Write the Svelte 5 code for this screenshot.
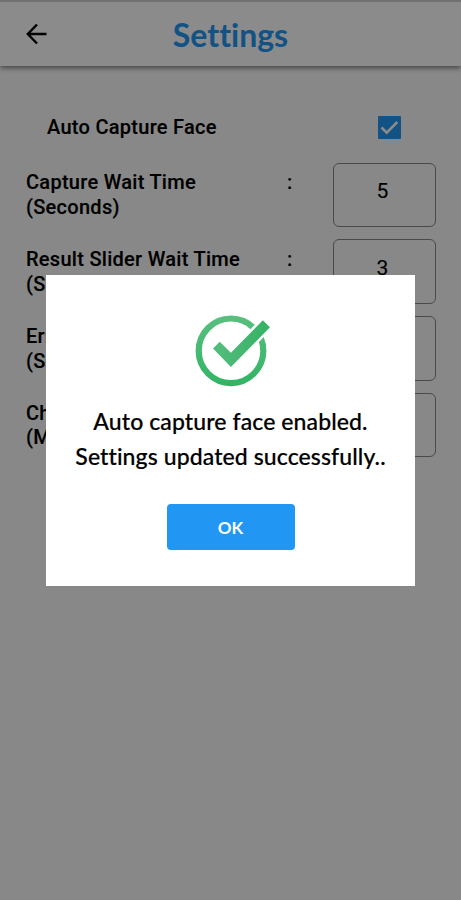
<script lang="ts">
	let autoCapture = $state(true);
	let dialogOpen = $state(true);

	let fields = $state([
		{ label: 'Capture Wait Time', unit: '(Seconds)', value: '5' },
		{ label: 'Result Slider Wait Time', unit: '(Seconds)', value: '3' },
		{ label: 'Error Wait Time', unit: '(Seconds)', value: '' },
		{ label: 'Check In Wait Time', unit: '(Minutes)', value: '' }
	]);
</script>

<div class="screen">
	<header class="app-bar">
		<button class="back" aria-label="Back">
			<svg viewBox="0 0 22 22" width="22" height="22">
				<path d="M20.5 11H2.5M11 1.5L1.8 11L11 20.5" />
			</svg>
		</button>
		<h1>Settings</h1>
	</header>

	<main>
		<div class="toggle-row">
			<span>Auto Capture Face</span>
			<button
				class="checkbox"
				class:checked={autoCapture}
				role="checkbox"
				aria-checked={autoCapture}
				aria-label="Auto Capture Face"
				onclick={() => (autoCapture = !autoCapture)}
			>
				{#if autoCapture}
					<svg viewBox="0 0 23 23" width="23" height="23">
						<path d="M3.5 11.5L8.7 16.7L19.3 6" />
					</svg>
				{/if}
			</button>
		</div>

		{#each fields as field}
			<div class="field">
				<div class="label">
					<span>{field.label}</span>
					<span>{field.unit}</span>
				</div>
				<span class="colon">:</span>
				<input bind:value={field.value} aria-label={field.label} />
			</div>
		{/each}
	</main>

	{#if dialogOpen}
		<div class="overlay">
			<div class="dialog" role="alertdialog" aria-label="Settings updated">
				<svg class="success" viewBox="0 0 76 74" width="76" height="74">
					<defs>
						<linearGradient id="green" x1="0" y1="0" x2="0" y2="74" gradientUnits="userSpaceOnUse">
							<stop offset="0" stop-color="#5abf80" />
							<stop offset="1" stop-color="#30b463" />
						</linearGradient>
						<linearGradient id="tick-green" x1="25" y1="0" x2="70" y2="0" gradientUnits="userSpaceOnUse">
							<stop offset="0" stop-color="#52bb7b" />
							<stop offset="1" stop-color="#36b366" />
						</linearGradient>
					</defs>
					<circle class="ring" cx="36" cy="36.8" r="32.3" />
					<!-- white outline cuts the ring where the tick crosses it -->
					<path class="gap" d="M18 34.5L24.7 27.8L35.9 38.7L67.8 6.2L75 13.2L35.9 53Z" />
					<path class="tick" d="M18 34.5L24.7 27.8L35.9 38.7L67.8 6.2L75 13.2L35.9 53Z" />
				</svg>
				<p>Auto capture face enabled.<br />Settings updated successfully..</p>
				<button class="ok" onclick={() => (dialogOpen = false)}>OK</button>
			</div>
		</div>
	{/if}
</div>

<style>
	:global(body) {
		margin: 0;
	}

	.screen {
		position: relative;
		height: 100vh;
		overflow: hidden;
		background: #fafafa;
		color: #000;
		font-family: Roboto, sans-serif;
		font-variant-ligatures: none;
	}

	button {
		padding: 0;
		border: 0;
		background: none;
	}

	svg {
		display: block;
	}

	.app-bar {
		display: grid;
		grid-template-columns: 72px 1fr 72px;
		align-items: center;
		box-sizing: border-box;
		height: 66px;
		border-top: 2px solid #d0d0d0;
		background: #fff;
		box-shadow: 0 2px 5px rgba(0, 0, 0, 0.5);
	}

	.back {
		margin-left: 26px;
		width: 22px;
	}

	.back path {
		fill: none;
		stroke: #000;
		stroke-width: 2.4;
	}

	h1 {
		margin: 2px 0 0;
		color: #2196f3;
		font-family: Lato, sans-serif;
		font-size: 32px;
		font-weight: 700;
		line-height: 40px;
		text-align: center;
	}

	main {
		padding: 49px 25px 0 26px;
		font-size: 20px;
		font-weight: 500;
		line-height: 24.6px;
		letter-spacing: 0.28px;
		-webkit-text-stroke: 0.15px #000;
	}

	.toggle-row {
		display: flex;
		justify-content: space-between;
		align-items: center;
		height: 24px;
		margin-bottom: 23.6px;
		padding: 0 35px 0 21px;
	}

	.checkbox {
		box-sizing: border-box;
		width: 23px;
		height: 23px;
		border: 2px solid #757575;
		border-radius: 1px;
	}

	.checkbox.checked {
		border: 0;
		background: #2196f3;
	}

	.checkbox path {
		fill: none;
		stroke: #fff;
		stroke-width: 2.5;
	}

	.field {
		display: grid;
		grid-template-columns: 261px 1fr 103px;
		height: 64.5px;
		margin-bottom: 12.3px;
	}

	.label {
		display: flex;
		flex-direction: column;
		padding-top: 7.8px;
		white-space: nowrap;
	}

	.colon {
		padding-top: 7.8px;
	}

	input {
		box-sizing: border-box;
		width: 103px;
		height: 64.5px;
		padding: 0 8px 8px 4px;
		border: 1px solid #888;
		border-radius: 6px;
		background: transparent;
		color: #000;
		font-family: Roboto, sans-serif;
		font-size: 21px;
		text-align: center;
		-webkit-text-stroke: 0.15px #000;
	}

	.overlay {
		position: absolute;
		inset: 0;
		display: flex;
		justify-content: center;
		align-items: flex-start;
		padding-top: 275px;
		background: rgba(0, 0, 0, 0.455);
	}

	.dialog {
		display: flex;
		flex-direction: column;
		align-items: center;
		box-sizing: border-box;
		width: 369px;
		height: 311px;
		padding-top: 39px;
		background: #fff;
	}

	.success {
		margin-left: 4px;
	}

	.ring {
		fill: none;
		stroke: url(#green);
		stroke-width: 6.2;
	}

	.gap {
		fill: #fff;
		stroke: #fff;
		stroke-width: 5;
	}

	.tick {
		fill: url(#tick-green);
	}

	p {
		margin: 16px 0 0;
		font-family: Lato, sans-serif;
		font-size: 23px;
		font-weight: 500;
		line-height: 34.5px;
		letter-spacing: 0.1px;
		text-align: center;
		white-space: nowrap;
		-webkit-text-stroke: 0.2px #000;
	}

	.ok {
		width: 128px;
		height: 46px;
		margin-top: 31px;
		border-radius: 4px;
		background: #2196f3;
		color: #fff;
		font-family: Lato, sans-serif;
		font-size: 17px;
		font-weight: 700;
	}
</style>
